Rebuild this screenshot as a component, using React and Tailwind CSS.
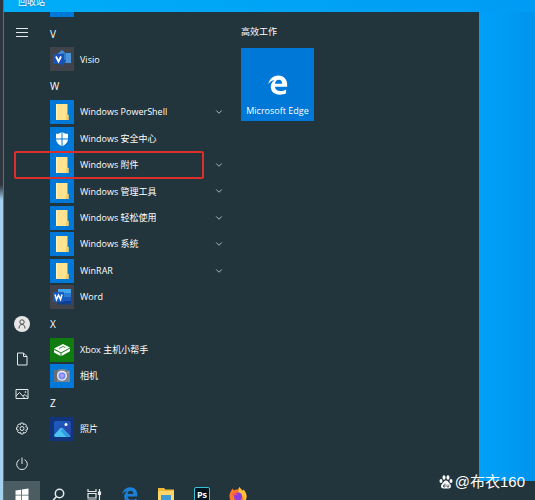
import React from 'react';
import { ChevronDown } from 'lucide-react';

const FolderIcon = () => (
  <svg viewBox="0 0 24 24" className="w-6 h-6" aria-hidden="true">
    <path d="M6 4h11.500v11H18.500v5H6z" fill="#ffe38f" />
    <path d="M6 4h1.200v16H6z" fill="#fff0bd" />
    <path d="M16 16l2.500-1.500V20H16z" fill="#f5ce62" />
  </svg>
);

const ShieldIcon = () => (
  <svg viewBox="0 0 24 24" className="w-6 h-6" aria-hidden="true">
    <path d="M12 5c-1.800 1.300-3.800 1.800-6 1.800V12c0 3.200 2.400 5.700 6 7.200 3.600-1.500 6-4 6-7.200V6.800C15.800 6.800 13.800 6.300 12 5z" fill="#fff" />
    <path d="M12 4.500v15M5.500 12h13" stroke="#0078d7" strokeWidth="1" />
  </svg>
);

const VisioIcon = () => (
  <svg viewBox="0 0 24 24" className="w-6 h-6" aria-hidden="true">
    <path d="M12 3l5 4.500-5 4.500-5-4.500z" fill="#3f8fe0" />
    <path d="M12 6h9v10h-9z" fill="#3577c9" />
    <path d="M16 6h5v10h-5z" fill="#4a94dd" />
    <path d="M9 13h7l-3 6-4-3z" fill="#1a4fa3" />
    <rect x="3" y="7" width="11" height="10" rx="1" fill="#1852b5" />
    <path d="M6 9.500l2.500 5 2.500-5" fill="none" stroke="#fff" strokeWidth="1.800" />
  </svg>
);

const WordIcon = () => (
  <svg viewBox="0 0 24 24" className="w-6 h-6" aria-hidden="true">
    <path d="M8 4h13v4.500H8z" fill="#41a5ee" />
    <path d="M8 8h13v4H8z" fill="#2b7cd3" />
    <path d="M8 12h13v4H8z" fill="#185abd" />
    <path d="M8 16h13v3.500H8z" fill="#103f91" />
    <rect x="3" y="7" width="11" height="10" rx="1" fill="#185abd" />
    <path d="M5 9.500l1.500 5 2-4.500 2 4.500 1.500-5" fill="none" stroke="#fff" strokeWidth="1.500" />
  </svg>
);

const XboxIcon = () => (
  <svg viewBox="0 0 24 24" className="w-6 h-6" aria-hidden="true">
    <path d="M4 10.500L13 6l7 3.500-9 5z" fill="#fff" />
    <path d="M4 11.700l6.500 3.600v2.700L4 14.500zM11.500 15.300L20 10.600v2.600L11.500 18z" fill="#fff" />
    <path d="M9 10.500l4-2 2.500 1.200" fill="none" stroke="#107c10" strokeWidth="0.800" />
  </svg>
);

const CameraIcon = () => (
  <svg viewBox="0 0 24 24" className="w-6 h-6" aria-hidden="true">
    <path d="M4 6.500h3.500L9 5h6l1.500 1.500H20V18H4z" fill="#7e848c" />
    <path d="M4 6.500h3V18H4z" fill="#676d76" />
    <circle cx="12" cy="11.800" r="5" fill="#f0f0f5" />
    <circle cx="12" cy="11.800" r="3.600" fill="#6f8bf3" />
    <circle cx="12" cy="11.800" r="2" fill="#b49bf5" />
    <circle cx="18" cy="8.500" r="0.700" fill="#ffb36b" />
  </svg>
);

const PhotosIcon = () => (
  <svg viewBox="0 0 24 24" className="w-6 h-6" aria-hidden="true">
    <defs>
      <linearGradient id="photoSky" x1="0" y1="0" x2="1" y2="1">
        <stop offset="0" stopColor="#1a5fc4" />
        <stop offset="1" stopColor="#2d3f9e" />
      </linearGradient>
      <clipPath id="photoClip">
        <rect x="4" y="4" width="17" height="16" rx="2" />
      </clipPath>
    </defs>
    <g clipPath="url(#photoClip)">
      <path d="M4 4h17v16H4z" fill="url(#photoSky)" />
      <path d="M3 19l7-7.500q1.500-1.500 3 0L21 20H3z" fill="#4cc2f1" />
      <path d="M12.500 11.500L21 20h-5l-5-6z" fill="#2f9be6" />
    </g>
    <circle cx="16" cy="7.500" r="1.500" fill="#fff" />
  </svg>
);

const EdgeIcon = ({ className }) => (
  <svg viewBox="0 0 24 24" className={className} fill="currentColor" aria-hidden="true">
    <path d="M.5 11C1.300 4.800 6 .5 12.200.5 19 .5 23 5.200 23 11.600v2.600H8.300c.2 3.400 3 5 6.600 5 2.500 0 4.700-.7 6.800-1.900v4.600c-2.200 1.200-4.800 1.700-7.700 1.700-6.600 0-10.700-3.700-10.700-9.400 0-3.300 1.700-6 4.500-7.800C5 6.300 2.300 8 .5 11zM8.400 10.400h8.600c0-3-1.500-4.700-4.100-4.700-2.500 0-4.100 1.800-4.500 4.700z" />
  </svg>
);

const SearchIcon = () => (
  <svg viewBox="0 0 20 20" className="w-5 h-5" fill="none" stroke="#e6eaec" strokeWidth="1.500" aria-hidden="true">
    <circle cx="11.500" cy="8.500" r="4.200" />
    <path d="M8.500 11.500L3.500 17" />
  </svg>
);

const TaskViewIcon = () => (
  <svg viewBox="0 0 20 20" className="w-5 h-5" fill="none" stroke="#e6eaec" strokeWidth="1.200" aria-hidden="true">
    <path d="M4 4v2.500h8V4M4 17v-2h8v2M4 8.500h8v4.500H4zM15.500 4v13" />
    <path d="M14.500 7h2v2.500h-2z" fill="#e6eaec" />
  </svg>
);

const WindowsLogo = () => (
  <svg viewBox="0 0 16 16" className="w-4 h-4" fill="#fff" aria-hidden="true">
    <path d="M1.500 3.500L7 2.700v5.100H1.500zM7.800 2.600l6.700-1v6.200H7.800zM1.500 8.600H7v5.100l-5.500-.8zM7.800 8.600h6.700v6.200l-6.700-1z" />
  </svg>
);

const ExplorerIcon = () => (
  <svg viewBox="0 0 20 20" className="w-5 h-5" aria-hidden="true">
    <path d="M2 3h6l1.500 1.500H18V18H2z" fill="#f0b93a" />
    <path d="M2 6h16v12H2z" fill="#ffd768" />
    <path d="M5 10h10v8h-3v-3H8v3H5z" fill="#3f9ad6" />
  </svg>
);

const PhotoshopIcon = () => (
  <span className="flex w-4 h-4 items-center justify-center rounded-xs border border-[#35c5d8] bg-[#03141f] text-[9px] leading-3 font-bold text-white">
    Ps
  </span>
);

const FirefoxIcon = () => (
  <svg viewBox="0 0 20 20" className="w-5 h-5" aria-hidden="true">
    <path d="M3 6l1.500-2.500L6 5.500c1.500-1 2.500-1 4-.8L11.500 2c.5 1.500 2 2.500 3.500 4l.5-1.500C17.500 7 18.500 9 18.500 11.500a8.500 8.500 0 0 1-17 0c0-2.500.5-4 1.500-5.500z" fill="#ff7a2b" />
    <path d="M11.500 2c.5 1.500 2 2.500 3.500 4l.5-1.500C17.500 7 18.500 9 18.500 11.500c0 3-2 6-5 7 3-4 2.500-7.500-2-10.500-1.500-1.500-1.500-4 0-6z" fill="#ffc53a" />
    <circle cx="10" cy="11.500" r="4" fill="#8b3fe0" />
    <path d="M4 9c2-1.500 4-1 6 .5-2 0-2.500 1-4.500 1z" fill="#ff4f5e" />
  </svg>
);

const PawIcon = () => (
  <svg viewBox="0 0 14 14" className="w-3.5 h-3.5" fill="#fff" aria-hidden="true">
    <ellipse cx="2" cy="6" rx="1.500" ry="2" />
    <ellipse cx="5" cy="2.500" rx="1.500" ry="2.200" />
    <ellipse cx="9" cy="2.500" rx="1.500" ry="2.200" />
    <ellipse cx="12" cy="6" rx="1.500" ry="2" />
    <path d="M7 5.500c2 0 2.500 2 4 3.500 1.500 1.300 1.300 4.500-1.500 4.500H4.500C1.700 13.500 1.500 10.300 3 9c1.500-1.500 2-3.500 4-3.500z" />
    <path d="M6 8.500v3.500H4.500v-2H6M8 9.500V12h1.800V9.500" fill="none" stroke="#22343c" strokeWidth="0.700" />
  </svg>
);

const RailIcon = ({ children }) => (
  <svg viewBox="0 0 14 14" className="w-3.5 h-3.5" fill="none" stroke="#e3e8ea" strokeWidth="1" aria-hidden="true">
    {children}
  </svg>
);

const railItems = [
  {
    name: '用户',
    icon: (
      <span className="flex w-4 h-4 items-center justify-center rounded-full bg-[#e6e6e6]">
        <svg viewBox="0 0 12 12" className="w-3 h-3" fill="none" stroke="#4c4c4c" aria-hidden="true">
          <circle cx="6" cy="4" r="2.200" />
          <path d="M3 10.500c0-2.500 1-4 3-4s3 1.500 3 4" />
        </svg>
      </span>
    ),
  },
  { name: '文档', icon: <RailIcon><path d="M2.500 1h6L12 4.500V13H2.500zM8.500 1v3.500H12" /></RailIcon> },
  {
    name: '图片',
    icon: (
      <RailIcon>
        <path d="M1 2.500h12v9H1zM1 9l3.500-3.500L9.500 11M8 9l2-1.500 3 3" />
        <circle cx="10.500" cy="5" r="0.500" />
      </RailIcon>
    ),
  },
  {
    name: '设置',
    icon: (
      <RailIcon>
        <path d="M5.900 1h2.200l.4 1.700 1.500-.9 1.500 1.500-.8 1.500 1.800.6v2.200l-1.800.5.8 1.500-1.500 1.500-1.500-.8-.4 1.700H5.900l-.4-1.700-1.500.8-1.500-1.500.8-1.500-1.800-.5V5.400l1.800-.6-.8-1.500L4 1.800l1.500.9z" />
        <circle cx="7" cy="6.500" r="2" />
      </RailIcon>
    ),
  },
  { name: '电源', icon: <RailIcon><path d="M7 .5V7M4.500 2.600a5.300 5.300 0 1 0 5 0" /></RailIcon> },
];

const apps = [
  { header: 'V' },
  { name: 'Visio', icon: <VisioIcon />, tile: 'bg-[#40444a]' },
  { header: 'W' },
  { name: 'Windows PowerShell', icon: <FolderIcon />, tile: 'bg-[#0078d7]', folder: true },
  { name: 'Windows 安全中心', icon: <ShieldIcon />, tile: 'bg-[#0078d7]' },
  { name: 'Windows 附件', icon: <FolderIcon />, tile: 'bg-[#0078d7]', folder: true, marked: true },
  { name: 'Windows 管理工具', icon: <FolderIcon />, tile: 'bg-[#0078d7]', folder: true },
  { name: 'Windows 轻松使用', icon: <FolderIcon />, tile: 'bg-[#0078d7]', folder: true },
  { name: 'Windows 系统', icon: <FolderIcon />, tile: 'bg-[#0078d7]', folder: true },
  { name: 'WinRAR', icon: <FolderIcon />, tile: 'bg-[#0078d7]', folder: true },
  { name: 'Word', icon: <WordIcon />, tile: 'bg-[#40444a]' },
  { header: 'X' },
  { name: 'Xbox 主机小帮手', icon: <XboxIcon />, tile: 'bg-[#107c10]' },
  { name: '相机', icon: <CameraIcon />, tile: 'bg-[#0078d7]' },
  { header: 'Z' },
  { name: '照片', icon: <PhotosIcon />, tile: 'bg-[#10357c]' },
];

const taskbarItems = [
  { name: '搜索', icon: <SearchIcon /> },
  { name: '任务视图', icon: <TaskViewIcon /> },
  { name: 'Microsoft Edge', icon: <EdgeIcon className="w-4 h-4 text-[#1b80d8]" /> },
  { name: '文件资源管理器', icon: <ExplorerIcon /> },
  { name: 'Photoshop', icon: <PhotoshopIcon /> },
  { name: 'Firefox', icon: <FirefoxIcon /> },
];

const AppRow = ({ item }) => {
  if (item.header) {
    return (
      <li className="h-6">
        <button className="flex h-6 items-center pt-0.5 text-[10px]">{item.header}</button>
      </li>
    );
  }
  return (
    <li className="relative h-6">
      <button className="flex w-full h-6 items-center gap-1.5 text-left">
        <span className={`w-6 h-6 shrink-0 ${item.tile}`}>{item.icon}</span>
        <span className="flex-1 whitespace-nowrap">{item.name}</span>
        {item.folder && <ChevronDown size={10} strokeWidth={2} className="text-[#cdd4d7]" />}
      </button>
      {item.marked && (
        <span className="absolute -inset-y-0.5 -left-9 right-5 rounded-xs border-2 border-[#dc2f2b]"></span>
      )}
    </li>
  );
};

const StartMenu = () => (
  <div className="flex flex-1 bg-[#22343c]">
    <nav className="flex w-9 shrink-0 flex-col justify-between">
      <button aria-label="展开" className="flex h-10 items-center justify-center">
        <RailIcon><path d="M1 3.500h12M1 7.500h12M1 11.500h12" /></RailIcon>
      </button>
      <div className="flex flex-col">
        {railItems.map((item) => (
          <button key={item.name} aria-label={item.name} className="flex h-[35px] items-center justify-center">
            {item.icon}
          </button>
        ))}
      </div>
    </nav>

    <div className="flex w-[174px] shrink-0 flex-col gap-1 ml-2.5 pb-10">
      <div className="w-6 h-[5px] bg-[#0078d7]"></div>
      <ul className="flex flex-1 flex-col justify-between">
        {apps.map((item) => (
          <AppRow key={item.name || item.header} item={item} />
        ))}
      </ul>
    </div>

    <section className="ml-[17px] pt-3">
      <h2 className="leading-4">高效工作</h2>
      <button className="mt-2 flex w-[73px] h-[73px] flex-col items-center justify-end gap-2 bg-[#0078d7] pb-0.5">
        <EdgeIcon className="w-5 h-5 text-white" />
        <span className="whitespace-nowrap leading-4">Microsoft Edge</span>
      </button>
    </section>
  </div>
);

const Taskbar = () => (
  <footer className="h-[19px] shrink-0 overflow-hidden bg-[#22343c]">
    <div className="flex h-7">
      <button aria-label="开始" className="flex w-9 items-center justify-center bg-[#4b5c63]">
        <WindowsLogo />
      </button>
      {taskbarItems.map((item) => (
        <button key={item.name} aria-label={item.name} className="flex w-9 items-center justify-center">
          {item.icon}
        </button>
      ))}
    </div>
  </footer>
);

export default function App() {
  return (
    <div className="relative flex h-screen overflow-hidden bg-[#009bf0] font-['Open_Sans','Noto_Sans_CJK_SC',sans-serif] text-[9px] text-white">
      <div className="w-1 shrink-0 border-r border-[#5f6f7c] bg-linear-to-b from-[#2f3640] from-37% to-[#a5d0ee] to-40%"></div>
      <div className="flex min-w-0 flex-1 flex-col">
        <div className="flex h-3 shrink-0 items-end overflow-hidden bg-linear-to-r from-[#00adf8] to-[#009bf4] pb-1 pl-3.5 leading-3">
          <span className="text-shadow-sm">回收站</span>
        </div>
        <main className="flex flex-1 bg-linear-to-r from-[#00a0f8] from-90% to-[#0094ee]">
          <StartMenu />
          <div className="w-14 shrink-0"></div>
        </main>
        <Taskbar />
      </div>

      <div className="absolute right-2.5 bottom-2 flex items-center gap-0.5 text-[15px] leading-5 font-['Liberation_Sans','Noto_Sans_CJK_SC',sans-serif]">
        <PawIcon />
        <span>@布衣160</span>
      </div>
    </div>
  );
}
